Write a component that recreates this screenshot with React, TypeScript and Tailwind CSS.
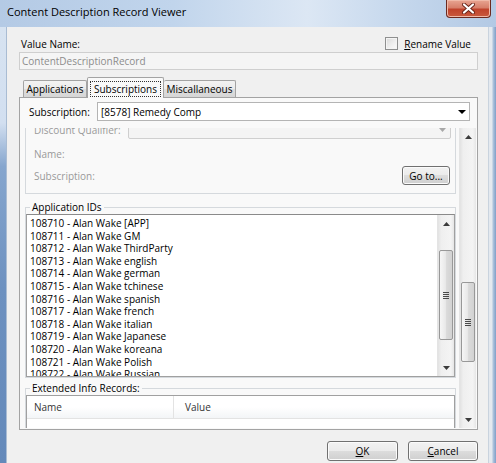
import React from "react";

const items = [
  "108710 - Alan Wake [APP]",
  "108711 - Alan Wake GM",
  "108712 - Alan Wake ThirdParty",
  "108713 - Alan Wake english",
  "108714 - Alan Wake german",
  "108715 - Alan Wake tchinese",
  "108716 - Alan Wake spanish",
  "108717 - Alan Wake french",
  "108718 - Alan Wake italian",
  "108719 - Alan Wake Japanese",
  "108720 - Alan Wake koreana",
  "108721 - Alan Wake Polish",
  "108722 - Alan Wake Russian",
];

function Tri({ up }: { up?: boolean }) {
  return (
    <svg width="7" height="4" viewBox="0 0 7 4">
      {up ? (
        <polygon points="0,4 7,4 3.5,0" fill="#3c3c3c" />
      ) : (
        <polygon points="0,0 7,0 3.5,4" fill="#3c3c3c" />
      )}
    </svg>
  );
}

function Grip() {
  return (
    <div className="flex flex-col gap-[1px]">
      <div className="h-[1px] w-[6px] bg-[#4a4a4a]" />
      <div className="h-[1px] w-[6px] bg-[#4a4a4a]" />
      <div className="h-[1px] w-[6px] bg-[#4a4a4a]" />
      <div className="h-[1px] w-[6px] bg-[#4a4a4a]" />
    </div>
  );
}

function VScroll({ thumb }: { thumb: string }) {
  return (
    <div className="w-[17px] shrink-0 flex flex-col bg-[linear-gradient(90deg,#e2e2e2_0%,#efefef_20%,#f4f4f4_80%,#e6e6e6_100%)] border-l border-[#e4e4e4]">
      <div className="h-[17px] flex items-center justify-center">
        <Tri up />
      </div>
      <div className="flex-1 min-h-0">
        <div
          className={`${thumb} mx-[1px] rounded-[2px] border border-[#989898] bg-[linear-gradient(90deg,#f6f6f6_0%,#e9e9e9_45%,#dadada_55%,#d2d2d2_100%)] flex items-center justify-center`}
        >
          <Grip />
        </div>
      </div>
      <div className="h-[17px] flex items-center justify-center">
        <Tri />
      </div>
    </div>
  );
}

function Btn({ children, w }: { children: React.ReactNode; w: string }) {
  return (
    <div
      className={`${w} h-full rounded-[3px] border border-[#707070] bg-[linear-gradient(#f2f2f2_0%,#ebebeb_50%,#dddddd_50%,#cfcfcf_100%)] shadow-[inset_0_0_0_1px_#fbfbfb] flex items-center justify-center text-black`}
    >
      {children}
    </div>
  );
}

export default function App() {
  return (
    <div className="w-[496px] h-[463px] overflow-hidden flex flex-col font-['Open_Sans',sans-serif] text-[10px] text-black leading-none">
      {/* Title bar */}
      <div className="h-[27px] shrink-0 flex items-start justify-between bg-[linear-gradient(90deg,#b4cae5_0%,#c1d5ec_35%,#dce7f4_62%,#c6d8ed_80%,#b3c9e4_100%)]">
        <span className="pl-[7px] pt-[6px] text-[11px] text-black">Content Description Record Viewer</span>
        <div className="mr-[5px] w-[45px] h-[18px] rounded-b-[4px] border border-t-0 border-[#6b2a20] bg-[linear-gradient(#e8a592_0%,#d77f6a_45%,#c0432c_55%,#c95a3e_100%)] shadow-[inset_0_0_0_1px_#f0b9a8] flex items-center justify-center">
          <svg width="13" height="11" viewBox="0 0 13 11">
            <path d="M2 1.5 L11 9.5 M11 1.5 L2 9.5" stroke="#6a2418" strokeWidth="4" strokeLinecap="round" />
            <path d="M2 1.5 L11 9.5 M11 1.5 L2 9.5" stroke="#ffffff" strokeWidth="2.2" strokeLinecap="round" />
          </svg>
        </div>
      </div>

      <div className="flex-1 min-h-0 flex">
        {/* Left frame */}
        <div className="w-[7px] shrink-0 bg-[linear-gradient(#d7e3f1_0%,#d2dff0_22%,#86a6ce_32%,#6d91c0_60%,#6489ba_100%)] border-r border-[#a9bcd3]" />

        {/* Client */}
        <div className="flex-1 min-w-0 flex flex-col bg-[#f0f0f0] pl-[12px] pr-[10px] pt-[9px]">
          <div className="h-[15px] flex items-center justify-between">
            <span className="pl-[2px]">Value Name:</span>
            <div className="flex items-center gap-[6px] pr-[7px]">
              <div className="w-[13px] h-[13px] border border-[#8e8f8f] bg-[linear-gradient(135deg,#d9d9d9_0%,#f0f0f0_60%,#fbfbfb_100%)] shadow-[inset_0_0_0_1px_#f4f4f4]" />
              <span>
                <span className="underline">R</span>ename Value
              </span>
            </div>
          </div>

          <div className="mt-[1px] h-[18px] border border-[#cfcfcf] bg-[#f5f5f5] flex items-center px-[2px] text-[#8c8c8c]">
            ContentDescriptionRecord
          </div>

          {/* Tabs */}
          <div className="mt-[7px] h-[20px] flex items-end pl-[4px]">
            <div className="w-[64px] h-[17px] border border-b-0 border-[#a3a3a3] bg-[linear-gradient(#f3f3f3_0%,#ebebeb_50%,#dedede_50%,#d6d6d6_100%)] flex items-center justify-center rounded-t-[2px]">
              Applications
            </div>
            <div className="relative z-10 -mb-[1px] w-[77px] h-[21px] border border-b-0 border-[#a3a3a3] bg-[#f9f9f9] flex items-start justify-center pt-[3px] rounded-t-[2px]">
              <div className="h-[16px] w-[71px] border border-dotted border-[#333] flex items-center justify-center">
                Subscriptions
              </div>
            </div>
            <div className="w-[72px] h-[17px] border border-b-0 border-l-0 border-[#a3a3a3] bg-[linear-gradient(#f3f3f3_0%,#ebebeb_50%,#dedede_50%,#d6d6d6_100%)] flex items-center justify-center rounded-t-[2px]">
              Miscallaneous
            </div>
          </div>

          {/* Tab panel */}
          <div className="h-[333px] shrink-0 border border-[#a3a3a3] bg-[#f9f9f9] flex flex-col">
            <div className="mt-[4px] h-[19px] flex items-center">
              <span className="w-[77px] pl-[9px]">Subscription:</span>
              <div className="w-[373px] h-[19px] bg-white border border-[#b4b4b4] flex items-center justify-between pl-[3px] pr-[3px]">
                <span>[8578] Remedy Comp</span>
                <svg width="8" height="4" viewBox="0 0 8 4">
                  <polygon points="0,0 8,0 4,4" fill="#000" />
                </svg>
              </div>
            </div>

            {/* Scroll viewport */}
            <div className="mt-[7px] mb-[1px] mr-[1px] flex-1 min-h-0 flex overflow-hidden">
              <div className="flex-1 min-w-0 overflow-hidden">
                <div className="-mt-[23px] pl-[5px] pr-[3px]">
                  {/* Group 1 */}
                  <div className="border border-[#d5d9dd] pt-[14px] pb-[8px] text-[#9a9a9a]">
                    <div className="h-[19px] flex items-center">
                      <span className="w-[102px] pl-[8px]">Discount Qualifier:</span>
                      <div className="flex-1 mr-[4px] h-[19px] border border-[#cfcfcf] bg-[#f4f4f4] rounded-[2px] flex items-center justify-end pr-[4px]">
                        <svg width="7" height="4" viewBox="0 0 7 4">
                          <polygon points="0,0 7,0 3.5,4" fill="#a8a8a8" />
                        </svg>
                      </div>
                    </div>
                    <div className="mt-[5px] h-[19px] flex items-center pl-[8px]">Name:</div>
                    <div className="mt-[3px] h-[19px] flex items-center pl-[8px]">
                      <span>Subscription:</span>
                      <div className="ml-auto mr-[5px] h-[19px]">
                        <Btn w="w-[48px]">Go to...</Btn>
                      </div>
                    </div>
                  </div>

                  {/* Application IDs */}
                  <fieldset className="mt-[6px] border border-[#d5d9dd]">
                    <legend className="ml-[4px] px-[2px] leading-[14px]">Application IDs</legend>
                    <div className="h-[163px] border border-[#a0a0a0] border-t-[#8a8a8a] bg-white flex">
                      <div className="flex-1 min-w-0 overflow-hidden pl-[3px] pt-[2px] leading-[12.6px]">
                        {items.map((t) => (
                          <div key={t} className="whitespace-nowrap">
                            {t}
                          </div>
                        ))}
                      </div>
                      <VScroll thumb="mt-[18px] h-[90px]" />
                    </div>
                  </fieldset>

                  {/* Extended Info Records */}
                  <fieldset className="mt-[3px] border border-[#d5d9dd]">
                    <legend className="ml-[4px] px-[2px] leading-[14px]">Extended Info Records:</legend>
                    <div className="h-[60px] border border-[#a0a0a0] bg-white">
                      <div className="h-[23px] flex border-b border-[#e3e3e3] bg-[linear-gradient(#ffffff_0%,#ffffff_50%,#f3f5f7_100%)] text-[#333]">
                        <div className="w-[147px] border-r border-[#e3e3e3] flex items-center pl-[7px]">Name</div>
                        <div className="flex-1 flex items-center pl-[11px]">Value</div>
                      </div>
                    </div>
                  </fieldset>
                </div>
              </div>
              <VScroll thumb="mt-[137px] h-[80px]" />
            </div>
          </div>

          {/* Buttons */}
          <div className="mt-[11px] h-[20px] flex justify-end gap-[10px]">
            <Btn w="w-[71px]">
              <span>
                <span className="underline">O</span>K
              </span>
            </Btn>
            <Btn w="w-[70px]">
              <span>
                <span className="underline">C</span>ancel
              </span>
            </Btn>
          </div>
        </div>

        {/* Right frame */}
        <div className="w-[8px] shrink-0 border-l border-[#c9d3de] bg-[linear-gradient(90deg,#e4e9ef_0%,#e4e9ef_40%,#aec3dc_60%,#7f9fc8_100%)]" />
      </div>
    </div>
  );
}
